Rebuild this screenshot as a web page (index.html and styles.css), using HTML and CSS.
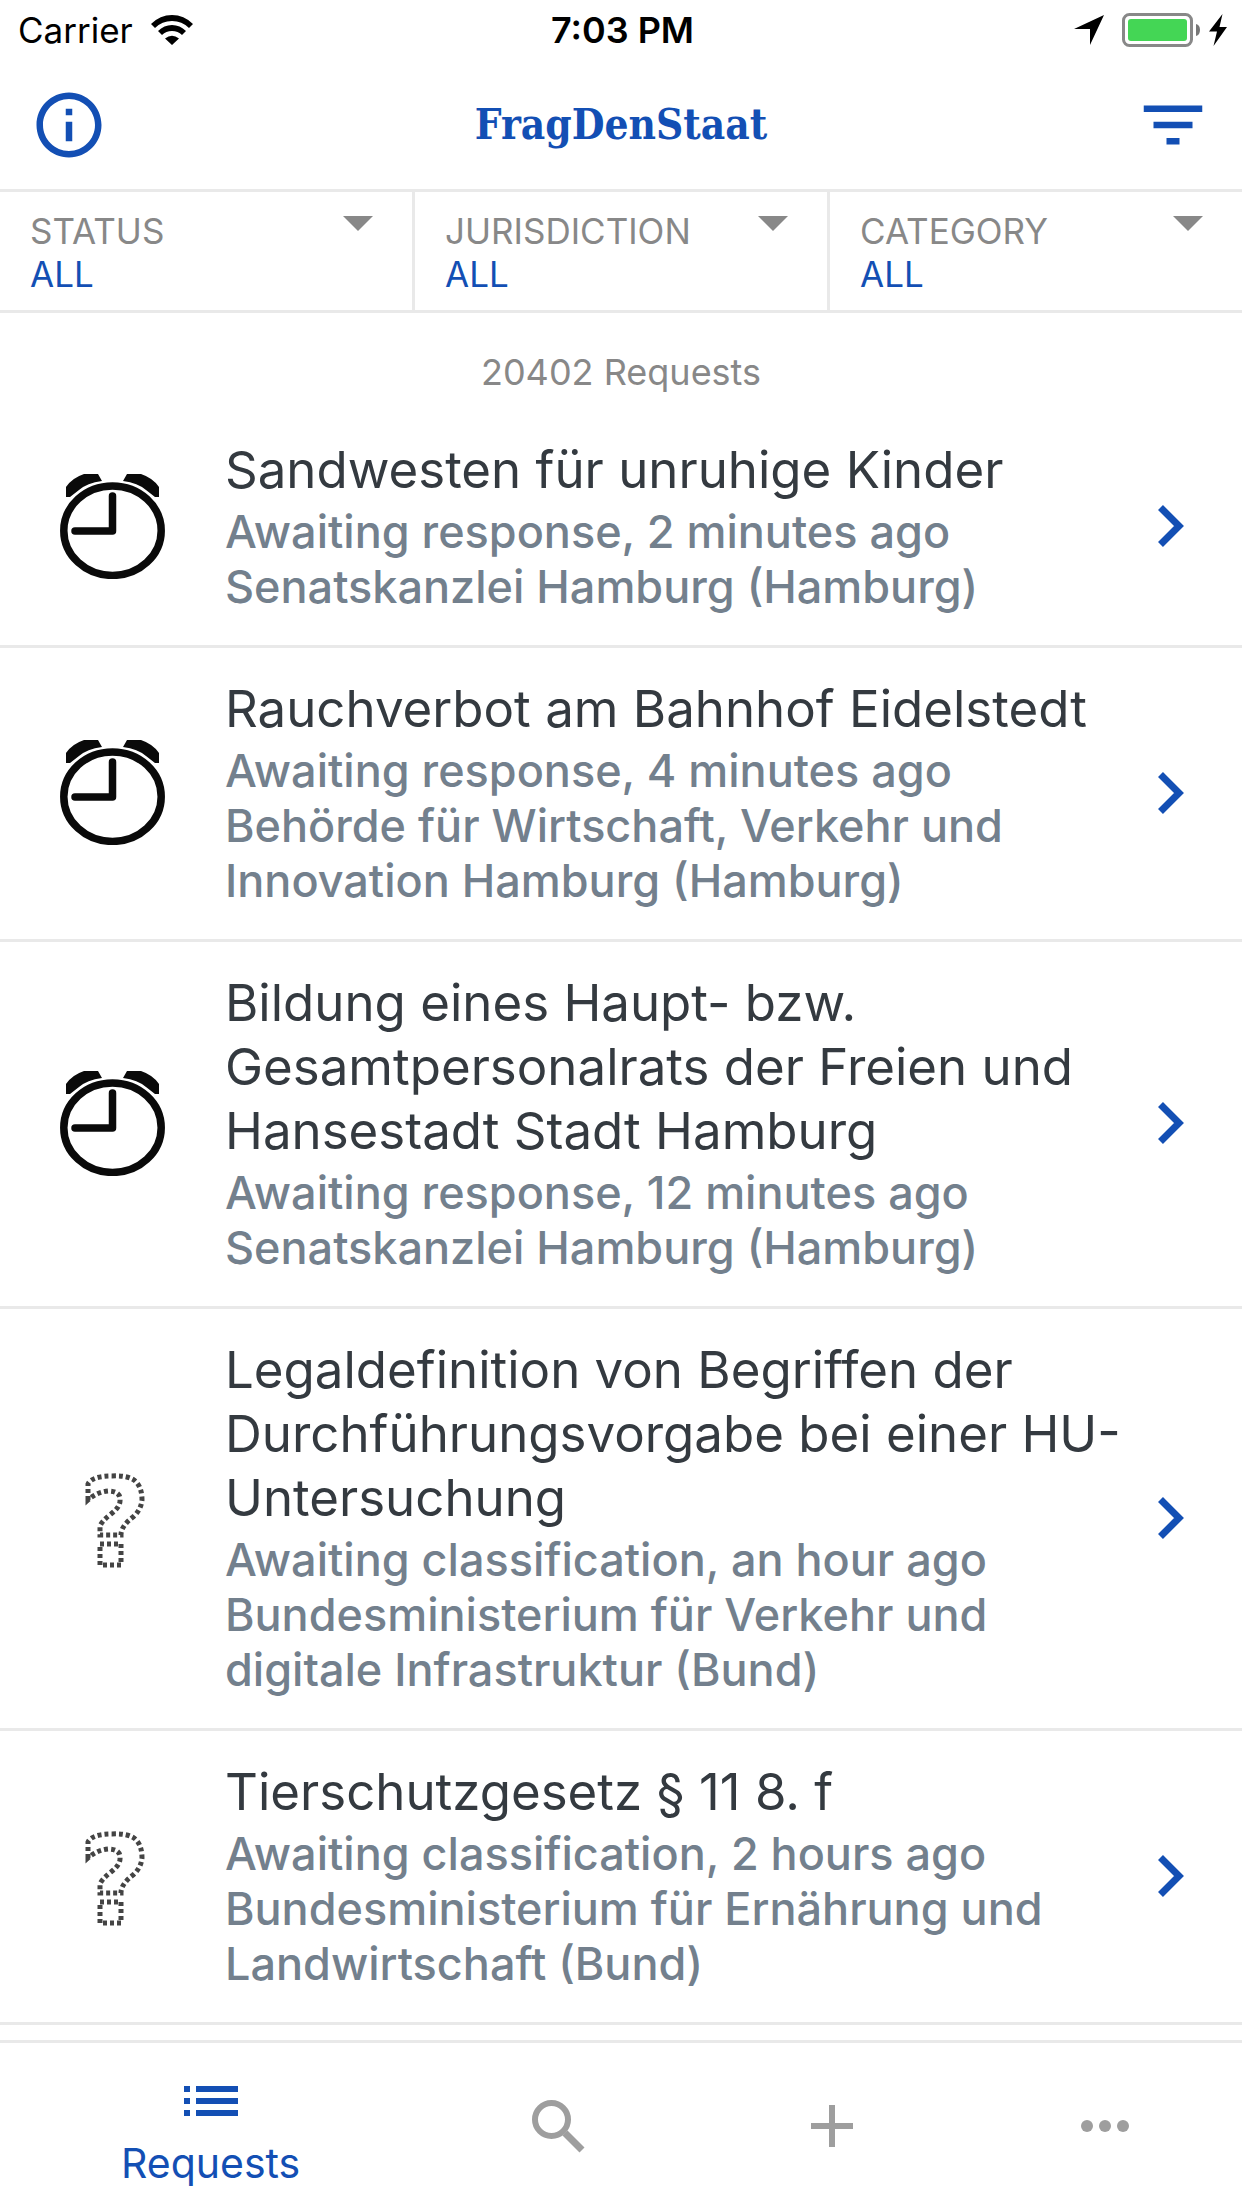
FILE: index.html
```html
<!DOCTYPE html>
<html lang="en">
<head>
<meta charset="utf-8">
<meta name="viewport" content="width=device-width">
<title>FragDenStaat</title>
<link rel="stylesheet" href="styles.css">
</head>
<body>
<svg class="sprite" aria-hidden="true">
  <symbol id="clock" viewBox="0 0 105 105">
    <ellipse cx="52.500" cy="56.700" rx="48.700" ry="44.700" fill="none" stroke="#0a0a0a" stroke-width="7.500"/>
    <path d="M52.500 22V57H15" fill="none" stroke="#0a0a0a" stroke-width="7.500" stroke-linecap="round" stroke-linejoin="round"/>
    <path d="M6 23V13Q12 4 24 0H38L42 7Q27 9 19 16L10 23Z" fill="#0a0a0a"/>
    <path d="M99 23V13Q93 4 81 0H67L63 7Q78 9 86 16L95 23Z" fill="#0a0a0a"/>
  </symbol>
  <symbol id="question" viewBox="0 0 105 105">
    <path d="M28 35V19Q32 11 52 11Q66 10 74 15Q82 21 82 35Q81 45 73 52Q61 61 61 70H40V61Q42 56 51 49Q60 42 60 36Q61 26 48 26Q37 27 28 35ZM40 79H61V100H40Z" fill="none" stroke="#444" stroke-width="5" stroke-dasharray="4 3"/>
  </symbol>
  <symbol id="chevron" viewBox="0 0 26 42">
    <path d="M2.500 2.500L21 21L2.500 39.500" fill="none" stroke="currentColor" stroke-width="7"/>
  </symbol>
</svg>

<div class="status-bar">
  <div class="carrier">
    <span>Carrier</span>
    <svg width="42" height="30" viewBox="0 0 42 30" aria-hidden="true">
      <path d="M0 9Q9 0 21 0T42 9L38 13Q31 6 21 6T4 13ZM7 16Q13 10 21 10T35 16L31 20Q27 16 21 16T11 20ZM14 23.500Q21 18 28 23.500L21 30Z"/>
    </svg>
  </div>
  <time class="clock-time">7:03 PM</time>
  <div class="indicators">
    <svg width="30" height="30" viewBox="0 0 30 30" aria-hidden="true"><path d="M30 0L16 30V14H0Z"/></svg>
    <svg class="battery" width="78" height="34" viewBox="0 0 78 34" aria-hidden="true">
      <rect x="1.500" y="1.500" width="68" height="31" rx="6" fill="none" stroke="#888" stroke-width="3"/>
      <rect x="6" y="6" width="59" height="22" rx="3" fill="#44d655"/>
      <path d="M74 11Q78 12 78 17T74 23Z" fill="#777"/>
    </svg>
    <svg width="18" height="32" viewBox="0 0 18 32" aria-hidden="true"><path d="M13.500 0L0 17.500H8L4.500 32L18 13H10.500Z"/></svg>
  </div>
</div>

<header class="app-bar">
  <button class="icon-button" type="button" aria-label="About">
    <svg width="78" height="78" viewBox="0 0 24 24" aria-hidden="true"><path fill="currentColor" d="M11 7h2v2h-2zm0 4h2v6h-2zm1-9C6.480 2 2 6.480 2 12s4.480 10 10 10 10-4.480 10-10S17.520 2 12 2zm0 18c-4.410 0-8-3.590-8-8s3.590-8 8-8 8 3.590 8 8-3.590 8-8 8z"/></svg>
  </button>
  <h1 class="brand">FragDenStaat</h1>
  <button class="icon-button" type="button" aria-label="Filter">
    <svg width="78" height="78" viewBox="0 0 24 24" aria-hidden="true"><path fill="currentColor" d="M10 18h4v-2h-4v2zM3 6v2h18V6H3zm3 7h12v-2H6v2z"/></svg>
  </button>
</header>

<form class="filters">
  <label class="filter">
    <span class="filter-name">STATUS</span>
    <svg width="30" height="15" viewBox="0 0 30 15" aria-hidden="true"><path fill="currentColor" d="M0 0H30L15 15Z"/></svg>
    <select class="filter-value"><option>ALL</option></select>
  </label>
  <label class="filter">
    <span class="filter-name">JURISDICTION</span>
    <svg width="30" height="15" viewBox="0 0 30 15" aria-hidden="true"><path fill="currentColor" d="M0 0H30L15 15Z"/></svg>
    <select class="filter-value"><option>ALL</option></select>
  </label>
  <label class="filter">
    <span class="filter-name">CATEGORY</span>
    <svg width="30" height="15" viewBox="0 0 30 15" aria-hidden="true"><path fill="currentColor" d="M0 0H30L15 15Z"/></svg>
    <select class="filter-value"><option>ALL</option></select>
  </label>
</form>

<main class="content">
  <p class="count">20402 Requests</p>
  <ul class="requests">
    <li><a class="request" href="#">
      <svg class="state" aria-hidden="true"><use href="#clock"/></svg>
      <div class="text">
        <h2>Sandwesten für unruhige Kinder</h2>
        <p>Awaiting response, 2 minutes ago<br>Senatskanzlei Hamburg (Hamburg)</p>
      </div>
      <svg class="chevron" aria-hidden="true"><use href="#chevron"/></svg>
    </a></li>
    <li><a class="request" href="#">
      <svg class="state" aria-hidden="true"><use href="#clock"/></svg>
      <div class="text">
        <h2>Rauchverbot am Bahnhof Eidelstedt</h2>
        <p>Awaiting response, 4 minutes ago<br>Behörde für Wirtschaft, Verkehr und Innovation Hamburg (Hamburg)</p>
      </div>
      <svg class="chevron" aria-hidden="true"><use href="#chevron"/></svg>
    </a></li>
    <li><a class="request" href="#">
      <svg class="state" aria-hidden="true"><use href="#clock"/></svg>
      <div class="text">
        <h2>Bildung eines Haupt- bzw. Gesamtpersonalrats der Freien und Hansestadt Stadt Hamburg</h2>
        <p>Awaiting response, 12 minutes ago<br>Senatskanzlei Hamburg (Hamburg)</p>
      </div>
      <svg class="chevron" aria-hidden="true"><use href="#chevron"/></svg>
    </a></li>
    <li><a class="request" href="#">
      <svg class="state" aria-hidden="true"><use href="#question"/></svg>
      <div class="text">
        <h2>Legaldefinition von Begriffen der Durchführungsvorgabe bei einer HU-Untersuchung</h2>
        <p>Awaiting classification, an hour ago<br>Bundesministerium für Verkehr und digitale Infrastruktur (Bund)</p>
      </div>
      <svg class="chevron" aria-hidden="true"><use href="#chevron"/></svg>
    </a></li>
    <li><a class="request" href="#">
      <svg class="state" aria-hidden="true"><use href="#question"/></svg>
      <div class="text">
        <h2>Tierschutzgesetz § 11 8. f</h2>
        <p>Awaiting classification, 2 hours ago<br>Bundesministerium für Ernährung und Landwirtschaft (Bund)</p>
      </div>
      <svg class="chevron" aria-hidden="true"><use href="#chevron"/></svg>
    </a></li>
  </ul>
</main>

<nav class="tabs">
  <a class="tab tab-active" href="#" aria-current="page">
    <svg width="54" height="30" viewBox="0 0 54 30" aria-hidden="true"><path fill="currentColor" d="M0 0h6v6H0zM12 0h42v6H12zM0 12h6v6H0zM12 12h42v6H12zM0 24h6v6H0zM12 24h42v6H12z"/></svg>
    <span>Requests</span>
  </a>
  <a class="tab" href="#" aria-label="Search">
    <svg width="54" height="54" viewBox="0 0 54 54" aria-hidden="true"><g fill="none" stroke="currentColor"><circle cx="20.500" cy="20.500" r="16.500" stroke-width="6"/><path d="M34 34L51 51" stroke-width="7"/></g></svg>
  </a>
  <a class="tab" href="#" aria-label="New request">
    <svg width="42" height="42" viewBox="0 0 42 42" aria-hidden="true"><path fill="currentColor" d="M18 0h6v18h18v6H24v18h-6V24H0v-6h18z"/></svg>
  </a>
  <a class="tab" href="#" aria-label="More">
    <svg width="48" height="12" viewBox="0 0 48 12" aria-hidden="true"><g fill="currentColor"><circle cx="6" cy="6" r="6"/><circle cx="24" cy="6" r="6"/><circle cx="42" cy="6" r="6"/></g></svg>
  </a>
</nav>
</body>
</html>
```
FILE: styles.css
```css
:root {
  --blue: #134fb4;
  --gray: #888;
  --line: #e9e9e9;
}

body {
  margin: 0;
  min-height: 100vh;
  display: flex;
  flex-direction: column;
  background: #fff;
  color: #000;
  font-family: Inter, "Liberation Sans", sans-serif;
}

svg {
  display: block;
  flex: none;
}

.sprite {
  position: absolute;
  width: 0;
  height: 0;
}

.status-bar {
  display: grid;
  grid-template-columns: 1fr auto 1fr;
  align-items: center;
  height: 60px;
  padding: 0 15px 0 18px;
  font-size: 35px;
}

.carrier,
.indicators {
  display: flex;
  align-items: center;
  gap: 18px;
}

.indicators {
  justify-content: flex-end;
  gap: 9px;
}

.battery {
  margin-left: 9px;
}

.clock-time {
  font-size: 36px;
  font-weight: 600;
}

.app-bar {
  display: flex;
  align-items: center;
  justify-content: space-between;
  height: 129px;
  padding: 0 30px;
  border-bottom: 3px solid var(--line);
  color: var(--blue);
}

.icon-button {
  padding: 0;
  border: 0;
  background: none;
  color: inherit;
}

.brand {
  margin: 0;
  font: bold 42px "DejaVu Serif Condensed", "DejaVu Serif", serif;
}

.filters {
  display: flex;
  border-bottom: 3px solid var(--line);
}

.filter {
  flex: 1;
  display: grid;
  grid-template-columns: 1fr auto;
  padding: 18px 39px 14px 30px;
  color: var(--gray);
  font-size: 35px;
  line-height: 43px;
}

.filter + .filter {
  border-left: 3px solid var(--line);
}

.filter svg {
  margin-top: 6px;
}

.filter-value {
  grid-column: 1 / -1;
  appearance: none;
  margin: 0;
  padding: 0;
  border: 0;
  background: none;
  color: var(--blue);
  font: inherit;
}

.content {
  flex: 1;
}

.count {
  margin: 0;
  padding: 37px 0 15px;
  color: var(--gray);
  font-size: 36px;
  line-height: 44px;
  text-align: center;
}

.requests {
  margin: 0;
  padding: 0;
  list-style: none;
}

.request {
  display: flex;
  align-items: center;
  padding: 29px 58px 31px 60px;
  border-bottom: 3px solid var(--line);
  color: inherit;
  text-decoration: none;
}

.state {
  width: 105px;
  height: 105px;
}

.text {
  flex: 1;
  padding: 0 30px 0 60px;
}

.text h2 {
  margin: 0 0 2px;
  color: #343a40;
  font-size: 51px;
  font-weight: 400;
  line-height: 64px;
}

.text p {
  margin: 0;
  color: #73808d;
  font-size: 45px;
  font-weight: 500;
  line-height: 55px;
}

.chevron {
  width: 26px;
  height: 42px;
  color: var(--blue);
}

.tabs {
  position: sticky;
  bottom: 0;
  display: flex;
  height: 165px;
  border-top: 3px solid var(--line);
  background: #fff;
}

.tab {
  flex: 100 0 0;
  display: flex;
  flex-direction: column;
  align-items: center;
  justify-content: center;
  gap: 22px;
  color: #9e9e9e;
  font-size: 41px;
  line-height: 50px;
  text-decoration: none;
}

.tab-active {
  flex-grow: 154;
  padding-top: 22px;
  color: var(--blue);
}
```
